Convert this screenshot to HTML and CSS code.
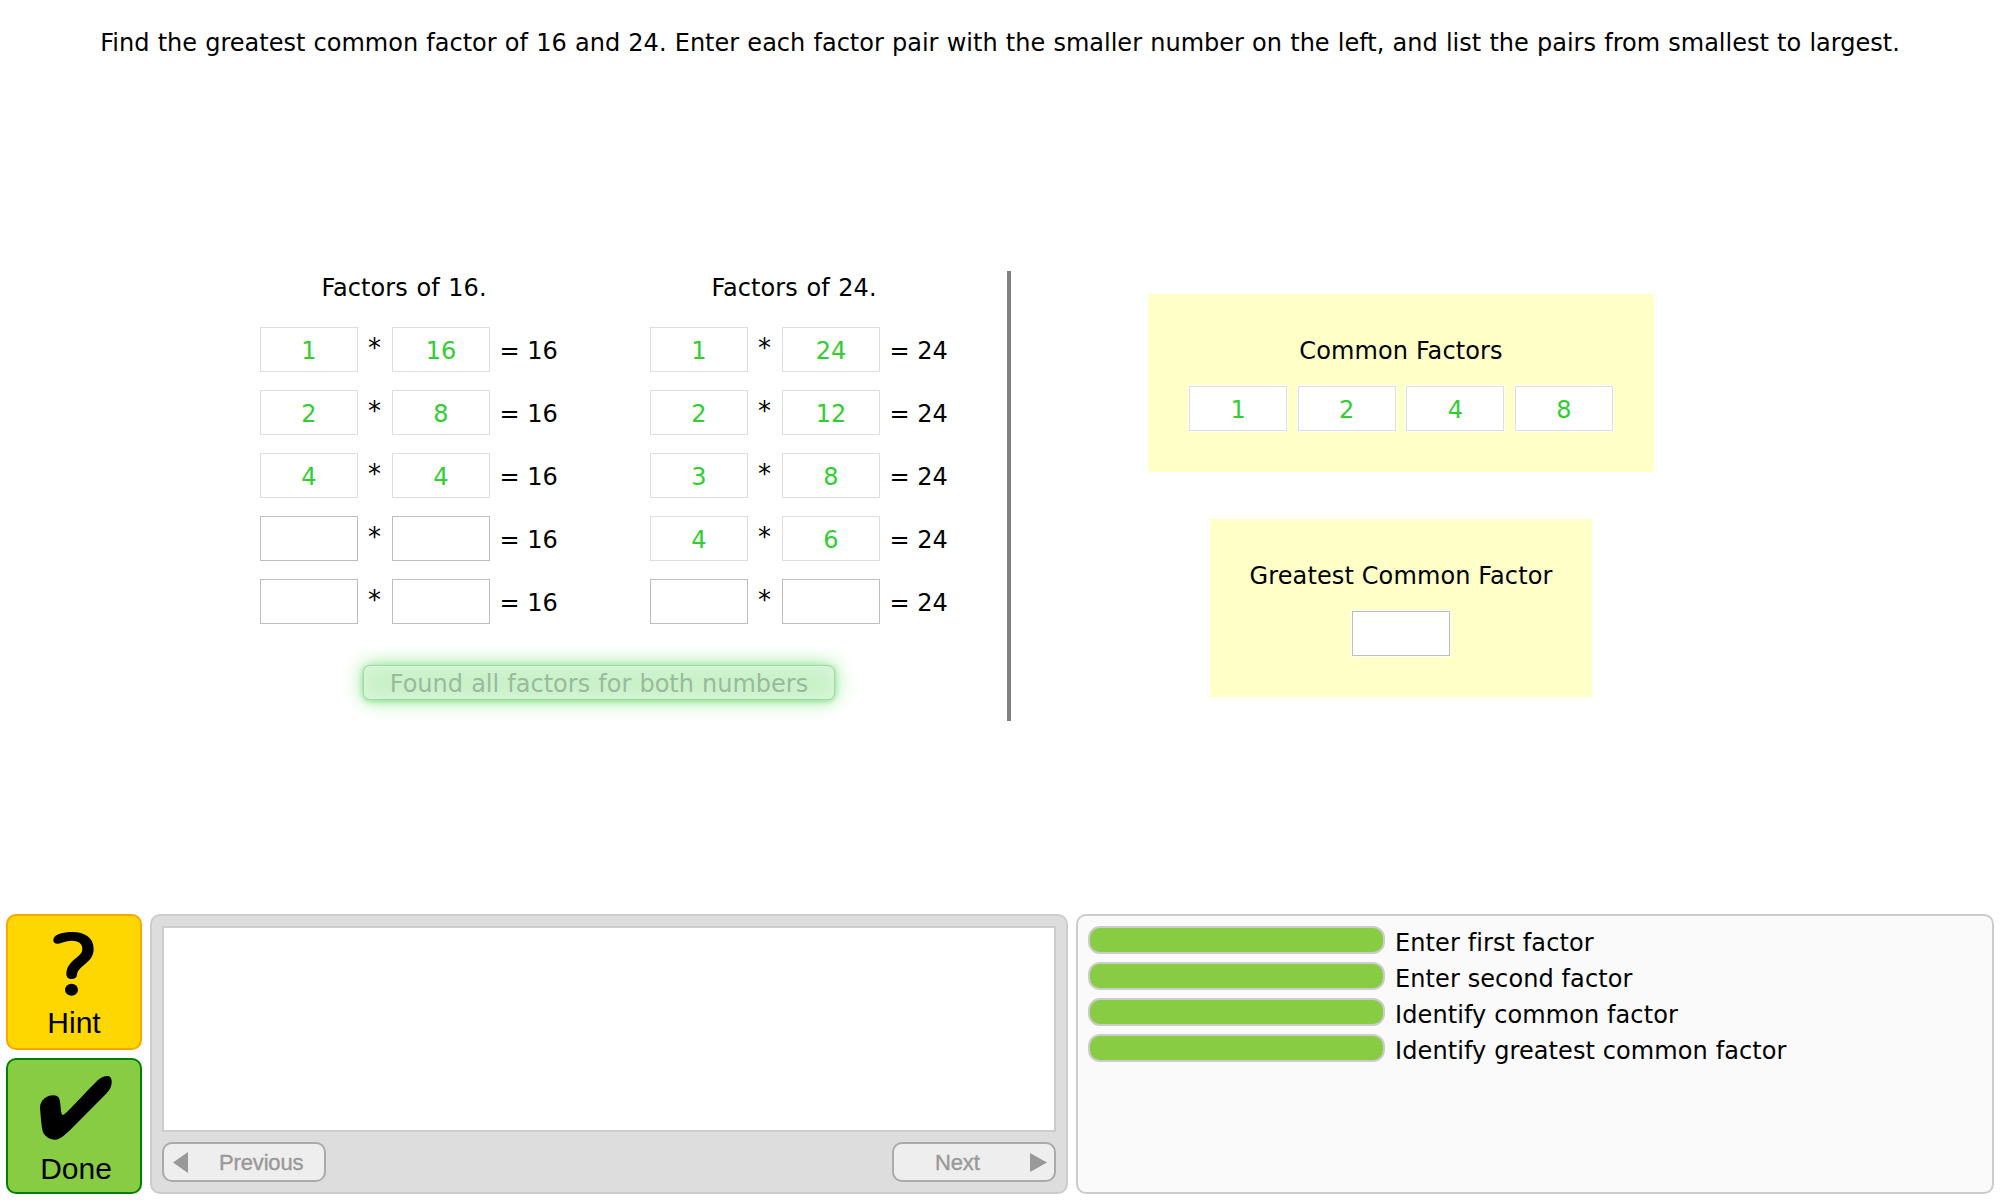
FILE: index.html
```html
<!DOCTYPE html>
<html lang="en">
<head>
<meta charset="utf-8">
<title>Greatest Common Factor</title>
<link rel="stylesheet" href="styles.css">
</head>
<body>
<p class="prompt"><span class="prompt-text">Find the greatest common factor of 16 and 24. Enter each factor pair with the smaller number on the left, and list the pairs from smallest to largest.</span></p>
<main class="work">
  <section class="factors">
    <div class="lists">
      <div class="list">
        <h2 class="title">Factors of 16.</h2>
        <div class="row"><span class="box ok">1</span><span class="op">*</span><span class="box ok">16</span><span class="eq">= 16</span></div>
        <div class="row"><span class="box ok">2</span><span class="op">*</span><span class="box ok">8</span><span class="eq">= 16</span></div>
        <div class="row"><span class="box ok">4</span><span class="op">*</span><span class="box ok">4</span><span class="eq">= 16</span></div>
        <div class="row"><span class="box"></span><span class="op">*</span><span class="box"></span><span class="eq">= 16</span></div>
        <div class="row"><span class="box"></span><span class="op">*</span><span class="box"></span><span class="eq">= 16</span></div>
      </div>
      <div class="list">
        <h2 class="title">Factors of 24.</h2>
        <div class="row"><span class="box ok">1</span><span class="op">*</span><span class="box ok">24</span><span class="eq">= 24</span></div>
        <div class="row"><span class="box ok">2</span><span class="op">*</span><span class="box ok">12</span><span class="eq">= 24</span></div>
        <div class="row"><span class="box ok">3</span><span class="op">*</span><span class="box ok">8</span><span class="eq">= 24</span></div>
        <div class="row"><span class="box ok">4</span><span class="op">*</span><span class="box ok">6</span><span class="eq">= 24</span></div>
        <div class="row"><span class="box"></span><span class="op">*</span><span class="box"></span><span class="eq">= 24</span></div>
      </div>
    </div>
    <div class="found"><span class="found-text">Found all factors for both numbers</span></div>
  </section>
  <section class="answers">
    <div class="card common">
      <h2 class="card-title">Common Factors</h2>
      <div class="boxes"><span class="box ok">1</span><span class="box ok">2</span><span class="box ok">4</span><span class="box ok">8</span></div>
    </div>
    <div class="card greatest">
      <h2 class="card-title">Greatest Common Factor</h2>
      <div class="boxes"><span class="box"></span></div>
    </div>
  </section>
</main>
<footer class="tutor">
  <div class="actions">
    <div class="action hint">
      <svg class="icon" viewBox="24 48 396 252"><path d="M160 119C162 102 190 96 217 96C255 96 281 114 281 146C281 170 268 181 253 194C240 205 232 212 231 224C230 233 224 237 215 237C205 237 199 231 199 221C200 205 205 196 220 181C235 167 247 162 247 146C247 130 235 122 215 122C195 122 184 131 173 131C164 131 159 126 160 119Z"/><ellipse cx="214.500" cy="269" rx="19.500" ry="18"/></svg>
      <span class="label">Hint</span>
    </div>
    <div class="action done">
      <svg class="icon" viewBox="24 480 396 252"><path d="M120 625C120 600 140 586 160 586C178 586 179 597 181 612C183 630 183 645 189 645C196 645 230 605 293 541C305 530 318 527 324 528C334 530 336 540 335 550C334 562 328 572 320 580L232 668C200 700 182 719 165 719C148 719 131 707 128 693C124 680 122 645 120 625Z"/></svg>
      <span class="label">Done</span>
    </div>
  </div>
  <div class="hints">
    <div class="message"></div>
    <div class="nav">
      <div class="nav-button previous"><svg class="arrow" viewBox="0 0 15 21"><path d="M15 0V21L0 10.500Z"/></svg><span>Previous</span></div>
      <div class="nav-button next"><span>Next</span><svg class="arrow" viewBox="0 0 17 19"><path d="M0 0V19L17 9.500Z"/></svg></div>
    </div>
  </div>
  <div class="skills">
    <div class="skill"><span class="bar"></span><span class="skill-name">Enter first factor</span></div>
    <div class="skill"><span class="bar"></span><span class="skill-name">Enter second factor</span></div>
    <div class="skill"><span class="bar"></span><span class="skill-name">Identify common factor</span></div>
    <div class="skill"><span class="bar"></span><span class="skill-name">Identify greatest common factor</span></div>
  </div>
</footer>
</body>
</html>
```
FILE: styles.css
```css
* { box-sizing: border-box; }
body {
  margin: 0;
  height: 1200px;
  display: flex;
  flex-direction: column;
  background: #fff;
  color: #000;
  font: 24px/30px Verdana, "DejaVu Sans", sans-serif;
  overflow: hidden;
}
.prompt { margin: 0; padding-top: 28px; height: 271px; text-align: center; white-space: nowrap; word-spacing: .59px; }
.work { display: flex; height: 643px; }
.factors { width: 1011px; height: 450px; padding-left: 260px; border-right: 4px solid #808080; }
.lists { display: flex; gap: 92px; }
.list { width: 298px; }
.title { margin: 0 0 24px; padding: 2px 10px 0 0; width: 298px; text-align: center; font: inherit; word-spacing: .8px; letter-spacing: .08px; }
.row { display: flex; height: 45px; margin-bottom: 18px; }
.box {
  width: 98px;
  height: 45px;
  flex: none;
  border: 1px solid #bdbdbd;
  background: #fff;
  line-height: 46px;
  text-align: center;
}
.box.ok { border-color: #dedede; color: #32cd32; }
.op { width: 34px; padding-right: 1px; text-align: center; font-size: 26px; line-height: 43px; }
.eq { padding-left: 9.500px; line-height: 48px; white-space: nowrap; }
.found {
  width: 472px;
  height: 35px;
  margin: 23px 0 0 103px;
  border: 1px solid #a3d9a6;
  border-radius: 7px;
  background: #c9f2c9;
  color: #9aba9b;
  text-align: center;
  line-height: 36px;
  white-space: nowrap;
  word-spacing: .5px;
  box-shadow: 0 0 20px #8be68b, 0 1px 5px #8fdc8f, inset 0 0 16px #dff7df;
}
.answers { flex: 1; display: flex; flex-direction: column; align-items: center; gap: 47px; padding: 23px 208px 0 0; margin-left: -1px; }
.card { height: 178px; padding-top: 42px; background: #ffffc8; text-align: center; }
.common { width: 506px; }
.greatest { width: 382px; }
.card-title { margin: 0 0 20px; font: inherit; white-space: nowrap; letter-spacing: .12px; }
.boxes { display: flex; justify-content: center; gap: 10.600px; }
.card .box { box-shadow: 0 0 0 1px #fff; }
.tutor { display: flex; gap: 8px; padding: 0 6px; height: 280px; }
.actions { display: flex; flex-direction: column; gap: 8px; }
.action { width: 136px; height: 136px; border: 2px solid; border-radius: 10px; display: flex; flex-direction: column; align-items: center; }
.hint { background: #ffd700; border-color: #ffa500; }
.done { background: #88cc44; border-color: #008000; }
.icon { width: 132px; height: 84px; display: block; }
.label { font: 30px/34px "Liberation Sans", Arial, sans-serif; padding-top: 6px; }
.done .label { padding: 8px 0 0 4px; }
.hints { width: 918px; padding: 10px; border: 2px solid #ccc; border-radius: 10px; background: #ddd; }
.message { height: 206px; border: 2px solid #ccc; background: #fff; }
.nav { display: flex; justify-content: space-between; margin-top: 10px; }
.nav-button {
  width: 164px;
  height: 40px;
  display: flex;
  align-items: center;
  border: 2px solid #aaa;
  border-radius: 10px;
  background: #eee;
  color: #999;
  fill: #999;
  font: 22px/36px "Liberation Sans", Arial, sans-serif;
  letter-spacing: -.15px;
  -webkit-text-stroke: .4px #999;
}
.nav-button span { padding-top: 1px; }
.previous { padding-left: 9px; gap: 31px; }
.next { padding: 0 7px 0 41px; justify-content: space-between; }
.arrow { width: 15px; height: 21px; }
.next .arrow { width: 17px; height: 19px; }
.skills { width: 918px; padding: 10px; border: 2px solid #ccc; border-radius: 10px; background: #fafafa; }
.skill { display: flex; gap: 10px; height: 36px; white-space: nowrap; }
.bar { width: 297px; height: 28px; flex: none; border: 2px solid #ccc; border-radius: 12px; background: #88cc44; }
.skill-name { line-height: 34px; letter-spacing: .1px; }
```
